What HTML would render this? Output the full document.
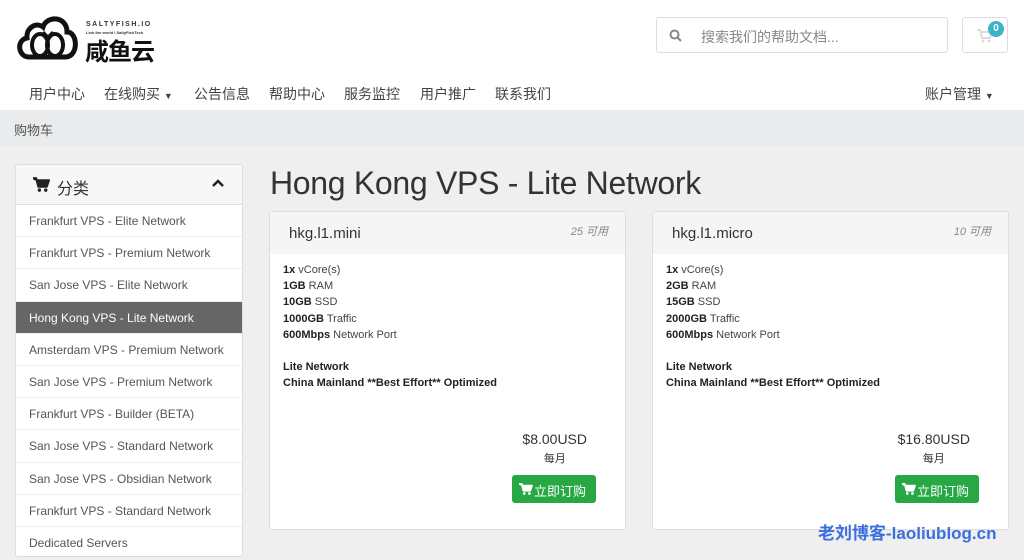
<!DOCTYPE html>
<html><head><meta charset="utf-8"><style>
*{box-sizing:border-box;margin:0;padding:0}
body{width:1024px;height:560px;overflow:hidden;background:#efefef;font-family:"Liberation Sans","Noto Sans CJK SC",sans-serif;color:#333;position:relative}
.hdr{position:absolute;left:0;top:0;width:1024px;height:110px;background:#fff}
.nav{position:absolute;top:84px;font-size:14px;color:#444}
.crumb{position:absolute;top:110px;left:0;width:1024px;height:36px;background:#e9ebed;font-size:13px;color:#555;padding:10px 14px}
.side{position:absolute;left:15px;top:164px;width:228px;height:393px;background:#fff;border:1px solid #ddd;border-radius:3px;overflow:hidden}
.side .h{height:40px;background:#f7f7f7;border-bottom:1px solid #ddd;font-size:16px;padding:10px 16px 10px 41px;position:relative}
.side .i{height:32.2px;border-bottom:1px solid #eee;font-size:12px;color:#555;padding:9px 13px}
.side .a{background:#666;color:#fff}
h1{position:absolute;left:270px;top:165px;font-size:32px;font-weight:normal;color:#333;letter-spacing:-0.3px}
.card{position:absolute;top:211px;width:357px;height:319px;background:#fff;border:1px solid #ddd;border-radius:3px}
.card .t{height:42px;background:#f5f5f5;font-size:15px;padding:13px 19px;color:#333;position:relative}
.card .t i{position:absolute;right:17px;top:11px;font-size:11px;color:#888}
.card .b{padding:8px 13px;font-size:11px;line-height:16.2px;color:#444}
.card b{color:#222}
.price{position:absolute;right:38px;top:219px;text-align:center;font-size:14px;color:#333}
.price small{display:block;font-size:11px;margin-top:3px}
.btn{position:absolute;right:29px;top:263px;width:84px;height:28px;background:#28a745;border-radius:3px;color:#fff;font-size:13px;padding:6px 0 0 22px;text-align:left}
.btn svg{position:absolute;left:7px;top:8px}
</style></head><body>
<div class="hdr">
<svg style="position:absolute;left:15px;top:10px" width="66" height="52" viewBox="0 0 66 52"><path d="M14 47 C3 47 1 30 12 28 C11 17 22 12 28 17 C32 5 52 6 52 22 C63 22 64 47 50 47 Z" fill="none" stroke="#111" stroke-width="5"/><ellipse cx="25" cy="35" rx="8" ry="11" fill="none" stroke="#111" stroke-width="4"/><ellipse cx="40" cy="35" rx="8" ry="11" fill="none" stroke="#111" stroke-width="4"/><path d="M28 22 L33 27 L38 22" fill="none" stroke="#111" stroke-width="3"/></svg>
<div style="position:absolute;left:86px;top:21px;font-size:7px;font-weight:bold;letter-spacing:1.5px">SALTYFISH.IO</div>
<div style="position:absolute;left:86px;top:30px;font-size:4px;font-weight:bold">Link the world \ SaltyFishTech</div>
<div style="position:absolute;left:85px;top:32px;font-size:24px;font-weight:bold;color:#111;letter-spacing:-1px">咸鱼云</div>
<div style="position:absolute;left:656px;top:17px;width:292px;height:36px;border:1px solid #ddd;border-radius:3px">
<svg style="position:absolute;left:12px;top:11px" width="13" height="13" viewBox="0 0 13 13"><circle cx="5.5" cy="5.5" r="4" fill="none" stroke="#888" stroke-width="2"/><path d="M8.5 8.5 L12 12" stroke="#888" stroke-width="2.2"/></svg>
<span style="position:absolute;left:44px;top:9px;font-size:14px;color:#888">搜索我们的帮助文档...</span></div>
<div style="position:absolute;left:962px;top:17px;width:46px;height:36px;border:1px solid #ddd;border-radius:3px">
<svg style="position:absolute;left:14px;top:11px" width="16" height="14" viewBox="0 0 16 14"><path d="M0 1 H3 L5 9 H13 L15 3 H4" fill="none" stroke="#ddd" stroke-width="2"/><circle cx="6" cy="12" r="1.5" fill="#ddd"/><circle cx="12" cy="12" r="1.5" fill="#ddd"/></svg>
<span style="position:absolute;left:25px;top:3px;width:16px;height:16px;border-radius:8px;background:#3cb3c6;color:#fff;font-size:10px;font-weight:bold;text-align:center;line-height:16px">0</span></div>
<span class="nav" style="left:29px">用户中心</span>
<span class="nav" style="left:104px">在线购买 <span style="font-size:9px">▼</span></span>
<span class="nav" style="left:194px">公告信息</span>
<span class="nav" style="left:269px">帮助中心</span>
<span class="nav" style="left:344px">服务监控</span>
<span class="nav" style="left:420px">用户推广</span>
<span class="nav" style="left:495px">联系我们</span>
<span class="nav" style="left:925px">账户管理 <span style="font-size:9px">▼</span></span>
</div>
<div class="crumb">购物车</div>
<div class="side">
<div class="h"><svg style="position:absolute;left:17px;top:12px" width="17" height="15" viewBox="0 0 16 14"><path d="M0 1 H3 L5 9 H13 L15 3 H4 Z" fill="#222" stroke="#222" stroke-width="2" stroke-linejoin="round"/><circle cx="6" cy="12.3" r="1.6" fill="#222"/><circle cx="12" cy="12.3" r="1.6" fill="#222"/></svg>分类<svg style="position:absolute;right:18px;top:14px" width="12" height="9" viewBox="0 0 12 9"><path d="M1 7 L6 2 L11 7" fill="none" stroke="#222" stroke-width="2.5"/></svg></div>
<div class="i">Frankfurt VPS - Elite Network</div>
<div class="i">Frankfurt VPS - Premium Network</div>
<div class="i">San Jose VPS - Elite Network</div>
<div class="i a">Hong Kong VPS - Lite Network</div>
<div class="i">Amsterdam VPS - Premium Network</div>
<div class="i">San Jose VPS - Premium Network</div>
<div class="i">Frankfurt VPS - Builder (BETA)</div>
<div class="i">San Jose VPS - Standard Network</div>
<div class="i">San Jose VPS - Obsidian Network</div>
<div class="i">Frankfurt VPS - Standard Network</div>
<div class="i">Dedicated Servers</div>
</div>
<h1>Hong Kong VPS - Lite Network</h1>
<div class="card" style="left:269px">
<div class="t">hkg.l1.mini<i>25 可用</i></div>
<div class="b"><b>1x</b> vCore(s)<br><b>1GB</b> RAM<br><b>10GB</b> SSD<br><b>1000GB</b> Traffic<br><b>600Mbps</b> Network Port<br><br><b>Lite Network<br>China Mainland **Best Effort** Optimized</b></div>
<div class="price">$8.00USD<small>每月</small></div>
<div class="btn"><svg width="14" height="12" viewBox="0 0 16 14"><path d="M0 1 H3 L5 9 H13 L15 3 H4 Z" fill="#fff" stroke="#fff" stroke-width="2" stroke-linejoin="round"/><circle cx="6" cy="12.3" r="1.6" fill="#fff"/><circle cx="12" cy="12.3" r="1.6" fill="#fff"/></svg>立即订购</div>
</div>
<div class="card" style="left:652px">
<div class="t">hkg.l1.micro<i>10 可用</i></div>
<div class="b"><b>1x</b> vCore(s)<br><b>2GB</b> RAM<br><b>15GB</b> SSD<br><b>2000GB</b> Traffic<br><b>600Mbps</b> Network Port<br><br><b>Lite Network<br>China Mainland **Best Effort** Optimized</b></div>
<div class="price">$16.80USD<small>每月</small></div>
<div class="btn"><svg width="14" height="12" viewBox="0 0 16 14"><path d="M0 1 H3 L5 9 H13 L15 3 H4 Z" fill="#fff" stroke="#fff" stroke-width="2" stroke-linejoin="round"/><circle cx="6" cy="12.3" r="1.6" fill="#fff"/><circle cx="12" cy="12.3" r="1.6" fill="#fff"/></svg>立即订购</div>
</div>
<div style="position:absolute;left:818px;top:519px;font-size:17px;font-weight:bold;color:#3b6fe0">老刘博客-laoliublog.cn</div>
</body></html>
